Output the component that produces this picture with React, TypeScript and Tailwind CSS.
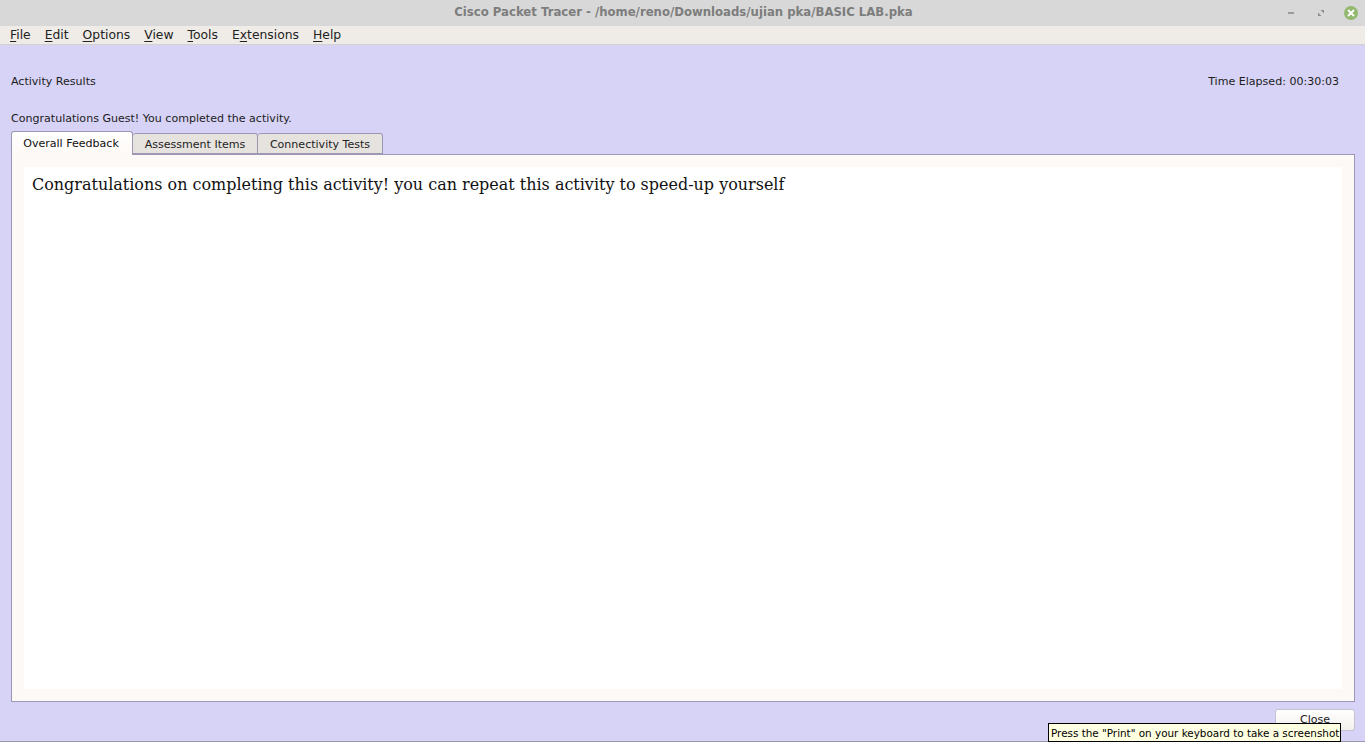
import { ReactNode } from 'react'

const menus: [string, string, string][] = [
  ['', 'F', 'ile'],
  ['', 'E', 'dit'],
  ['', 'O', 'ptions'],
  ['', 'V', 'iew'],
  ['', 'T', 'ools'],
  ['E', 'x', 'tensions'],
  ['', 'H', 'elp'],
]

function Tab({ children, active, width }: { children: ReactNode; active?: boolean; width: string }) {
  if (active) {
    return (
      <div className={`relative z-10 h-[24px] rounded-t-[3px] border border-b-0 border-[#9c98b4] bg-gradient-to-b from-white to-[#fdf9f6] pr-[2px] pt-[4px] text-center text-[#111] ${width}`}>
        {children}
      </div>
    )
  }
  return (
    <div className={`mt-[2px] h-[21px] rounded-t-[3px] border border-l-0 border-[#9c98b4] bg-[#e6e3df] pt-[3px] text-center text-[#222] ${width}`}>
      {children}
    </div>
  )
}

function App() {
  return (
    <div className="relative flex h-[742px] w-[1365px] flex-col overflow-hidden bg-[#d7d3f6] font-['DejaVu_Sans',sans-serif] text-[11.05px] text-[#1c1c1c]">
      <div className="relative flex h-[26px] items-center justify-center bg-[#d8d8d8] pl-[2px] text-[11.7px] font-bold text-[#7d7d7d]">
        Cisco Packet Tracer - /home/reno/Downloads/ujian pka/BASIC LAB.pka
        <div className="absolute right-[7px] top-[6px] flex items-center">
          <svg width="6" height="2" viewBox="0 0 6 2" className="mr-[24px]">
            <rect width="6" height="2" fill="#9a9a9a" />
          </svg>
          <svg width="6" height="6" viewBox="0 0 6 6" className="mr-[20px]">
            <path d="M2.5 0H6v3.5z M0 2.5L3.5 6H0z" fill="#8f8f8f" />
          </svg>
          <div className="flex h-[14px] w-[14px] items-center justify-center rounded-full bg-[#93b86f]">
            <svg width="8" height="8" viewBox="0 0 8 8">
              <path d="M1 1l6 6M7 1l-6 6" stroke="#fff" strokeWidth="1.8" />
            </svg>
          </div>
        </div>
      </div>

      <div className="flex h-[19px] items-center gap-[14px] border-b border-[#d4d1cd] bg-[#efece7] pl-[10px] text-[12.35px] text-[#222]">
        {menus.map(([a, b, c]) => (
          <span key={b + c}>
            {a}
            <span className="underline underline-offset-2">{b}</span>
            {c}
          </span>
        ))}
      </div>

      <div className="flex items-center justify-between pl-[11px] pr-[26px] pt-[29px]">
        <span>Activity Results</span>
        <span>Time Elapsed: 00:30:03</span>
      </div>

      <div className="mt-[20px] pl-[11px]">Congratulations Guest! You completed the activity.</div>

      <div className="mt-[4px] flex pl-[11px]">
        <Tab active width="w-[122px]">Overall Feedback</Tab>
        <Tab width="w-[125px]">Assessment Items</Tab>
        <Tab width="w-[125px]">Connectivity Tests</Tab>
      </div>

      <div className="-mt-px ml-[11px] mr-[10px] h-[548px] border border-[#9c98b4] bg-[#fdf9f6] p-[12px]">
        <div className="h-full bg-white pl-[8px] pt-[8px] font-['DejaVu_Serif',serif] text-[15.98px] leading-[20px] text-[#111]">
          Congratulations on completing this activity! you can repeat this activity to speed-up yourself
        </div>
      </div>

      <div className="mr-[10px] mt-[7px] flex justify-end">
        <button className="h-[22px] w-[80px] rounded-[3px] border border-[#c4c1d0] bg-gradient-to-b from-white to-[#f3f0ec] text-[#222]">
          Close
        </button>
      </div>

      <div className="absolute bottom-0 left-0 h-px w-full bg-[#9c98b4]" />

      <div className="absolute left-[1048px] top-[723px] flex h-[19px] w-[293px] items-center whitespace-nowrap border border-black bg-[#ffffe1] pl-[2px] pt-[2px] text-[10.4px] text-black">
        Press the "Print" on your keyboard to take a screenshot
      </div>
    </div>
  )
}

export default App
